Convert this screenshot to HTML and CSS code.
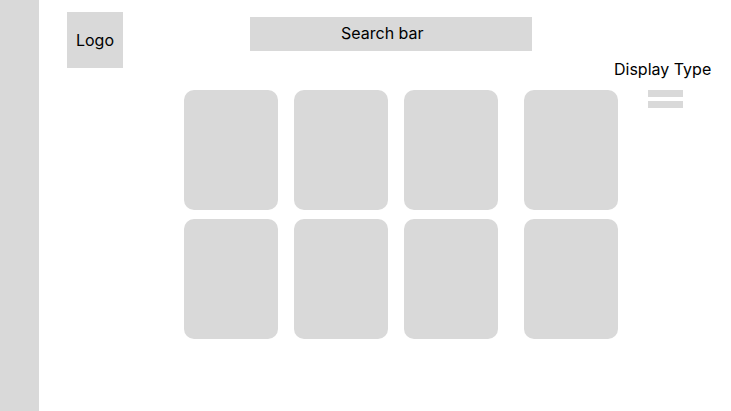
FILE: index.html
```html
<!DOCTYPE html>
<html>
<head>
  <meta charset="UTF-8">
  <title>Library</title>
  <link rel="stylesheet" href="styles.css">
</head>
<body>
  <div class="page">
    <div class="sidebar"></div>

    <div class="main">
      <div class="header">
        <div class="logo">Logo</div>
        <div class="search-bar">Search bar</div>
        <div class="display-label">Display Type</div>
      </div>

      <div class="content">
        <div class="card-grid">
          <div class="card"></div>
          <div class="card"></div>
          <div class="card"></div>
          <div class="card"></div>
          <div class="card"></div>
          <div class="card"></div>
          <div class="card"></div>
          <div class="card"></div>
        </div>

        <div class="display-toggle">
          <span class="bar"></span>
          <span class="bar"></span>
        </div>
      </div>
    </div>
  </div>
</body>
</html>
```

FILE: styles.css
```css
html, body {
  margin: 0;
  padding: 0;
  height: 100%;
}
body {
  font-family: Inter, "Noto Sans", sans-serif;
  font-size: 16px;
  line-height: 20px;
  color: #000;
  background: #fff;
}
.page {
  display: flex;
  height: 100%;
}
.sidebar {
  width: 39px;
  flex-shrink: 0;
  background-color: #d9d9d9;
}
.main {
  flex: 1;
  display: flex;
  flex-direction: column;
  padding-top: 12px;
}
.header {
  display: flex;
  align-items: flex-start;
  height: 56px;
  padding-left: 28px;
}
.logo {
  width: 56px;
  height: 56px;
  display: flex;
  align-items: center;
  justify-content: center;
  background-color: #d9d9d9;
}
.search-bar {
  width: 282px;
  height: 34px;
  margin-top: 5px;
  margin-left: 127px;
  padding-left: 91px;
  padding-bottom: 3px;
  box-sizing: border-box;
  display: flex;
  align-items: center;
  background-color: #d9d9d9;
}
.display-label {
  margin-left: 82px;
  margin-top: 47px;
  white-space: nowrap;
}
.content {
  display: flex;
  align-items: flex-start;
  margin-top: 22px;
  padding-left: 145px;
}
.card-grid {
  display: grid;
  grid-template-columns: repeat(3, 94px) 104px;
  column-gap: 16px;
  row-gap: 9px;
}
.card {
  width: 94px;
  height: 120px;
  border-radius: 10px;
  background-color: #d9d9d9;
}
.card:nth-child(4n) {
  justify-self: end;
}
.display-toggle {
  display: flex;
  flex-direction: column;
  gap: 4px;
  margin-left: 30px;
}
.bar {
  display: block;
  width: 35px;
  height: 7px;
  background-color: #d9d9d9;
}
```
